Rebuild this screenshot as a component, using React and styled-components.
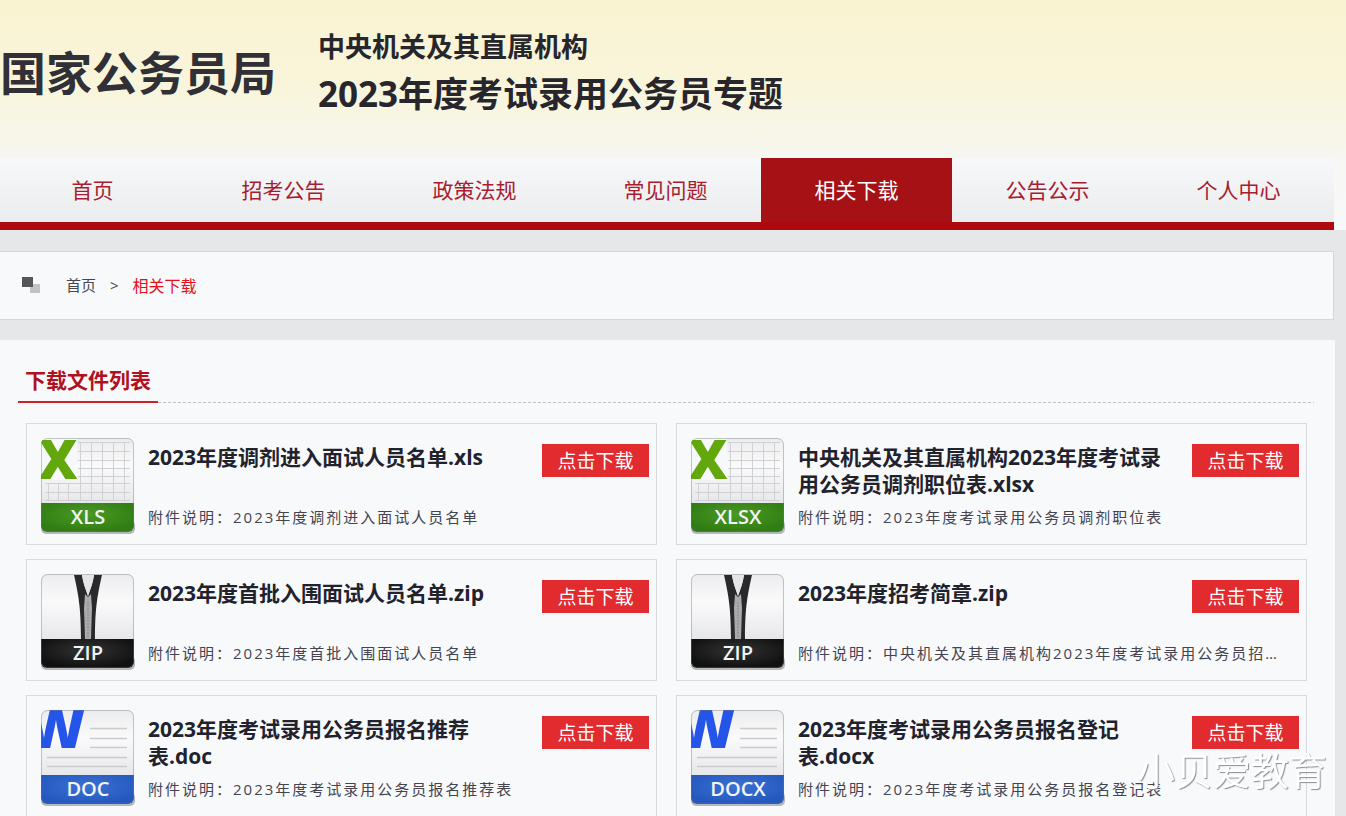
import React from "react";
import styled, { createGlobalStyle } from "styled-components";

const GlobalStyle = createGlobalStyle`
  *, *::before, *::after { box-sizing: border-box; }
  html { scrollbar-width: none; }
  body {
    margin: 0;
    background: #e6e7e9;
    color: #22222c;
    font-family: "Open Sans", "Noto Sans CJK SC", sans-serif;
    overflow-x: hidden;
  }
  h1, h2, h3, p, ul, ol { margin: 0; padding: 0; }
  ul, ol { list-style: none; }
  a { color: inherit; text-decoration: none; }
`;

const Top = styled.div`
  background: linear-gradient(#f9f3d2 0, #f9f5da 80px, #f7f6ea 140px, #f7f7f5 164px, #f7f8fa 231px);
`;

const Header = styled.header`
  display: flex;
  align-items: flex-start;
  gap: 42px;
  height: 158px;
  padding-top: 27px;
  white-space: nowrap;
`;

const Bureau = styled.p`
  font-size: 46px;
  font-weight: 700;
  line-height: 90px;
  color: #303036;
`;

const Topic = styled.h1`
  font-size: 35px;
  font-weight: 700;
  line-height: 54px;
  color: #26262c;
`;

const TopicLead = styled.span`
  display: block;
  font-size: 27px;
  line-height: 40px;
`;

const Nav = styled.nav`
  display: flex;
  margin: 0 12px 0 -3px;
  background: linear-gradient(#f7f8fa, #ebeced);
  border-bottom: 8px solid #ad090f;
`;

const NavLink = styled.a`
  flex: 1;
  text-align: center;
  font-size: 21px;
  line-height: 64px;
  color: ${(p) => (p.$active ? "#fff" : "#a81c30")};
  background: ${(p) => (p.$active ? "#a51114" : "transparent")};
`;

const Main = styled.main`
  display: flex;
  flex-direction: column;
  gap: 20px;
  padding-top: 21px;
  margin-right: 11px;
`;

const Crumbs = styled.nav`
  display: flex;
  align-items: center;
  height: 69px;
  margin-right: 1px;
  padding: 0 0 2px 22px;
  background: #f8f9fb;
  border: 1px solid #d6d7d9;
  border-left: 0;
  font-size: 15px;
  color: #444852;
`;

const CrumbIcon = styled.svg`
  margin-right: 26px;
`;

const CrumbArrow = styled.span`
  margin: 0 14px;
`;

const CurrentCrumb = styled.span`
  font-size: 16px;
  color: #e60f1c;
`;

const Panel = styled.section`
  padding: 20px 28px 26px 26px;
  background: #f8f9fb;
`;

const PanelHead = styled.div`
  display: flex;
  margin: 0 -7px 20px -8px;
  background: repeating-linear-gradient(90deg, #bfc1c4 0 3px, transparent 3px 5px) bottom / 100% 1px no-repeat;
`;

const PanelTitle = styled.h2`
  padding: 0 7px;
  font-size: 21px;
  line-height: 41px;
  color: #b01020;
  border-bottom: 2px solid #cf2028;
`;

const FileGrid = styled.ul`
  display: grid;
  grid-template-columns: 1fr 1fr;
  gap: 14px 19px;
`;

const Card = styled.li`
  display: grid;
  grid-template-columns: 94px 1fr 107px;
  grid-template-rows: 67px 1fr;
  column-gap: 13px;
  height: 122px;
  padding: 14px 7px 0 14px;
  border: 1px solid #d9dadd;
`;

const IconCell = styled.div`
  grid-row: 1 / 3;
`;

const FileName = styled.h3`
  padding: 6px 7px 0 0;
  font-size: 21px;
  font-weight: 700;
  line-height: 27px;
`;

const Note = styled.p`
  grid-column: 2 / 4;
  margin-right: 7px;
  font-size: 15px;
  line-height: 25px;
  letter-spacing: 2px;
  color: #444450;
  white-space: nowrap;
  overflow: hidden;
  text-overflow: ellipsis;
`;

const Download = styled.button`
  height: 33px;
  margin-top: 6px;
  padding: 2px 0 0;
  border: 0;
  background: #e12b2f;
  color: #fff;
  font: inherit;
  font-size: 19px;
  line-height: 31px;
  cursor: pointer;
`;

const Watermark = styled.div`
  position: fixed;
  right: 19px;
  bottom: 18px;
  font-size: 38px;
  line-height: 56px;
  color: #fff;
  text-shadow: 1px 1px 1px #8d8f94;
  white-space: nowrap;
  pointer-events: none;
`;

const palette = {
  xls: ["#2f7d14", "#4c9a22"],
  zip: ["#101010", "#333333"],
  doc: ["#2458bd", "#3b70d4"],
};

function Sheet() {
  const cols = [12, 22, 32, 44, 55, 66, 77, 88];
  const rows = [4, 13, 22, 30, 38, 45, 54, 62];
  return (
    <g stroke="#cfd1d5" strokeWidth="1">
      <path
        d={
          cols.map((x) => `M${x - 5}.5 ${x < 44 ? 45 : 4}V62`).join("") +
          rows.map((y) => `M${y < 45 ? 37 : 4} ${y}.5H89`).join("")
        }
      />
    </g>
  );
}

function Zipper() {
  return (
    <g>
      <path d="M33 1h8c1 8 4 15 6 21 2-6 5-13 6-21h8c-4 18-7 31-7 64H40c0-33-3-46-7-64Z" fill="#29292b" />
      <path d="M41 1c1 8 4 15 6 21 2-6 5-13 6-21Z" fill="#e4e5e7" />
      <path d="M44 20l3 3 3-3 1 14-1 31h-6l-1-31Z" fill="#aaaaac" />
      <path d="M47 28v36" stroke="#8a8a8d" strokeWidth="1" strokeDasharray="2 1" />
    </g>
  );
}

function Lines() {
  return (
    <path
      d="M49 18.500H86M49 28.500H86M49 37.500H86M6 47.500H86M6 56.500H86"
      stroke="#c9cbcf"
      strokeWidth="1.500"
    />
  );
}

function FileIcon({ kind, label, id }) {
  const [dark, light] = palette[kind];
  return (
    <svg width="94" height="98" viewBox="0 0 94 98" role="img" aria-label={label}>
      <defs>
        <clipPath id={`${id}-shape`}>
          <rect width="93" height="94" rx="6" />
        </clipPath>
        <linearGradient id={`${id}-paper`} x1="0" y1="0" x2="0" y2="1">
          <stop offset="0" stopColor="#ececee" />
          <stop offset="0.3" stopColor="#fafafb" />
          <stop offset="0.7" stopColor="#e6e7e9" />
        </linearGradient>
        <radialGradient id={`${id}-band`} cx="0.5" cy="0.4" r="0.6">
          <stop offset="0" stopColor={light} />
          <stop offset="1" stopColor={dark} />
        </radialGradient>
      </defs>
      <rect x="0" y="82" width="94" height="14" rx="5" fill="#b4b8b9" />
      <g clipPath={`url(#${id}-shape)`}>
        <rect width="93" height="94" fill={`url(#${id}-paper)`} />
        {kind === "xls" && <Sheet />}
        {kind === "xls" && <rect width="36" height="42" fill="#f7f8f9" />}
        {kind === "zip" && <Zipper />}
        {kind === "doc" && <Lines />}
        {kind === "xls" && (
          <text x="17" y="41" textAnchor="middle" fontSize="54" fontWeight="800" fill="#62a80c">X</text>
        )}
        {kind === "doc" && (
          <text x="45" y="38" textAnchor="end" fontSize="58" fontWeight="800" fill="#2455e8">W</text>
        )}
        <rect y="65" width="93" height="29" fill={`url(#${id}-band)`} />
        <text x="47" y="86" textAnchor="middle" fontSize="20" fontWeight="600" fill="#f2f4f5">{label}</text>
      </g>
      <rect x="0.500" y="0.500" width="92" height="93" rx="6" fill="none" stroke="#70757a" strokeOpacity="0.4" />
    </svg>
  );
}

const navItems = ["首页", "招考公告", "政策法规", "常见问题", "相关下载", "公告公示", "个人中心"];

const files = [
  { kind: "xls", label: "XLS", name: "2023年度调剂进入面试人员名单.xls", note: "2023年度调剂进入面试人员名单" },
  { kind: "xls", label: "XLSX", name: "中央机关及其直属机构2023年度考试录用公务员调剂职位表.xlsx", note: "2023年度考试录用公务员调剂职位表" },
  { kind: "zip", label: "ZIP", name: "2023年度首批入围面试人员名单.zip", note: "2023年度首批入围面试人员名单" },
  { kind: "zip", label: "ZIP", name: "2023年度招考简章.zip", note: "中央机关及其直属机构2023年度考试录用公务员招考简章" },
  { kind: "doc", label: "DOC", name: "2023年度考试录用公务员报名推荐表.doc", note: "2023年度考试录用公务员报名推荐表" },
  { kind: "doc", label: "DOCX", name: "2023年度考试录用公务员报名登记表.docx", note: "2023年度考试录用公务员报名登记表" },
];

export default function App() {
  return (
    <>
      <GlobalStyle />
      <Top>
        <Header>
          <Bureau>国家公务员局</Bureau>
          <Topic>
            <TopicLead>中央机关及其直属机构</TopicLead>
            2023年度考试录用公务员专题
          </Topic>
        </Header>
        <Nav>
          {navItems.map((item) => (
            <NavLink key={item} href="#" $active={item === "相关下载"}>{item}</NavLink>
          ))}
        </Nav>
      </Top>
      <Main>
        <Crumbs>
          <CrumbIcon width="18" height="18" viewBox="0 0 18 18" aria-hidden="true">
            <rect x="8" y="8" width="10" height="9" fill="#c2c3c6" />
            <rect x="0" y="1" width="11" height="10" fill="#55565a" />
          </CrumbIcon>
          <a href="#">首页</a>
          <CrumbArrow>&gt;</CrumbArrow>
          <CurrentCrumb>相关下载</CurrentCrumb>
        </Crumbs>
        <Panel>
          <PanelHead>
            <PanelTitle>下载文件列表</PanelTitle>
          </PanelHead>
          <FileGrid>
            {files.map((file, i) => (
              <Card key={file.name}>
                <IconCell>
                  <FileIcon kind={file.kind} label={file.label} id={`file${i}`} />
                </IconCell>
                <FileName>{file.name}</FileName>
                <Download type="button">点击下载</Download>
                <Note>附件说明：{file.note}</Note>
              </Card>
            ))}
          </FileGrid>
        </Panel>
      </Main>
      <Watermark>小贝爱教育</Watermark>
    </>
  );
}
